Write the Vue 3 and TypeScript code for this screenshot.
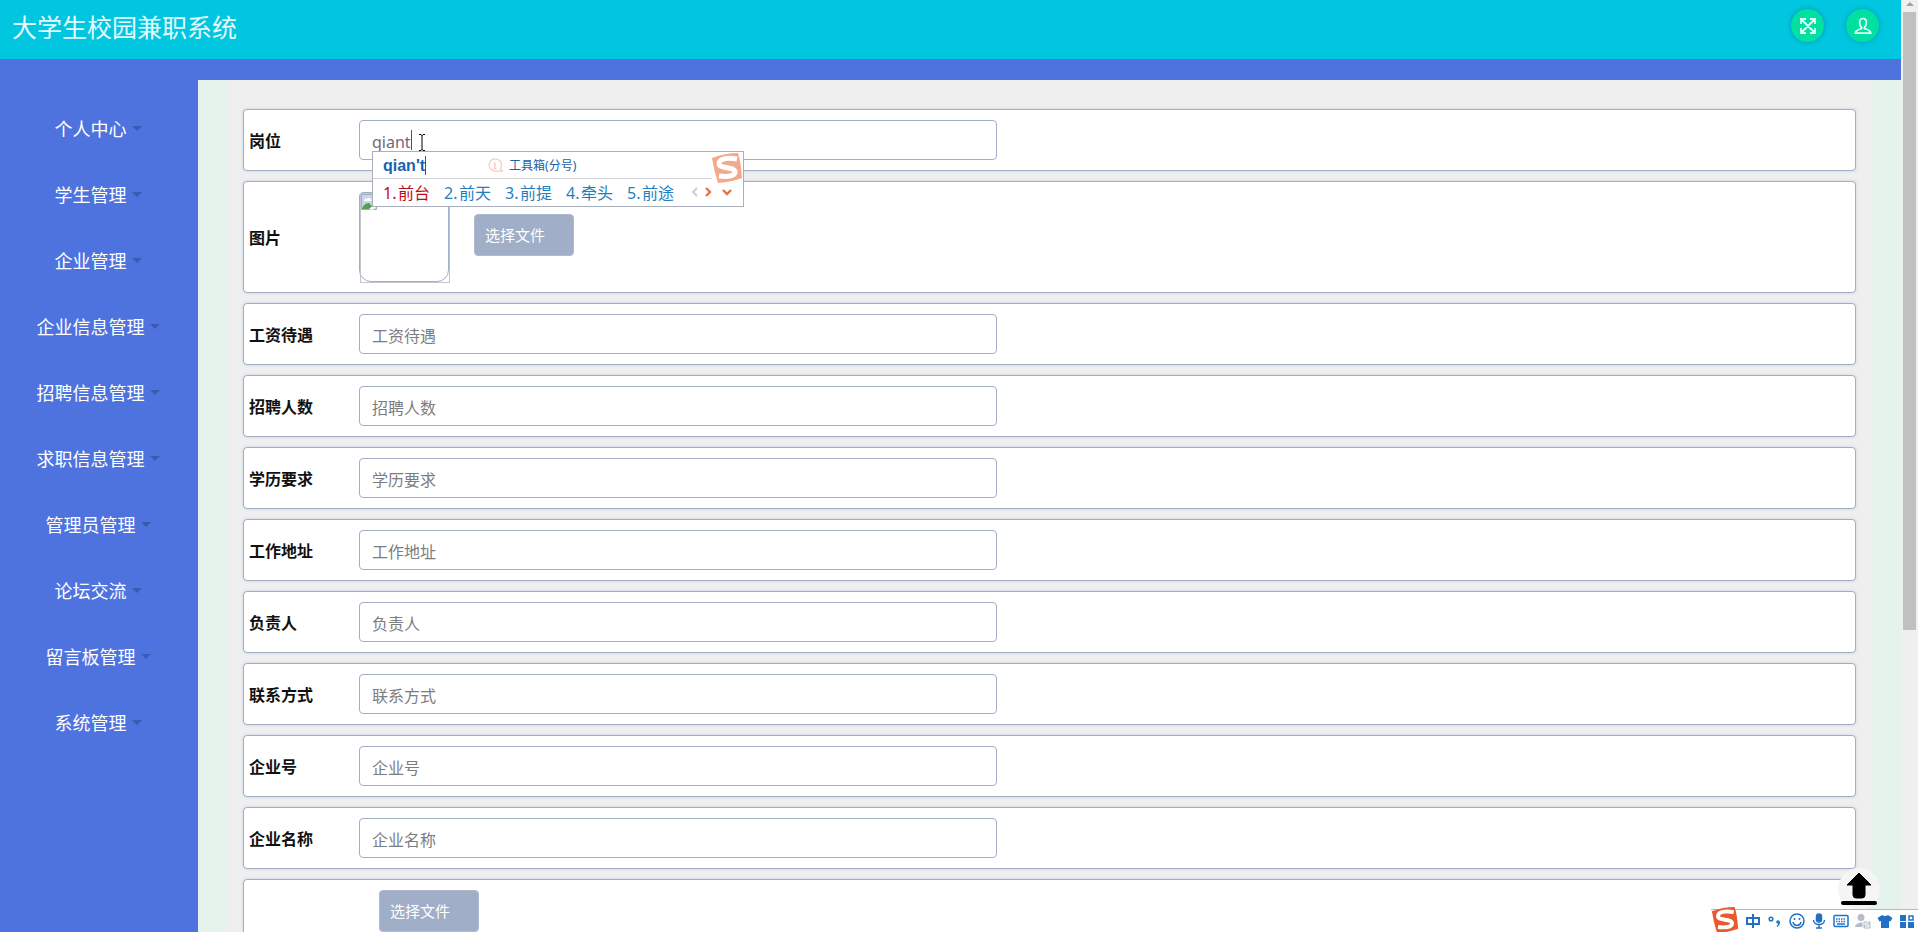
<script setup lang="ts">
import { ref } from 'vue'

interface Field {
  id: string
  label: string
}

const menus: string[] = [
  '个人中心',
  '学生管理',
  '企业管理',
  '企业信息管理',
  '招聘信息管理',
  '求职信息管理',
  '管理员管理',
  '论坛交流',
  '留言板管理',
  '系统管理',
]

const fields: Field[] = [
  { id: 'salary', label: '工资待遇' },
  { id: 'headcount', label: '招聘人数' },
  { id: 'education', label: '学历要求' },
  { id: 'address', label: '工作地址' },
  { id: 'principal', label: '负责人' },
  { id: 'contact', label: '联系方式' },
  { id: 'companyNo', label: '企业号' },
  { id: 'companyName', label: '企业名称' },
]

const candidates: string[] = ['前台', '前天', '前提', '牵头', '前途']
const post = ref('qiant')
</script>

<template>
  <div class="screen">
    <div class="page">
      <header class="top">
        <h1>大学生校园兼职系统</h1>
        <div class="actions">
          <button type="button" aria-label="全屏">
            <svg viewBox="0 0 16 16" width="16" height="16" fill="none" stroke="#e4fff6" stroke-width="1.8">
              <path d="M2 2l12 12M14 2L2 14M1 6V1h5M10 1h5v5M15 10v5h-5M6 15H1v-5" />
            </svg>
          </button>
          <button type="button" aria-label="用户">
            <svg viewBox="0 0 18 18" width="18" height="18" fill="none" stroke="#e4fff6" stroke-width="1.7">
              <path d="M9 1.500C6.400 1.500 5.600 3.500 5.600 5.500c0 2 .6 3.600 2 4.800v1.200C4.500 12.400 1.500 13 1.200 16.200h15.600c-.3-3.200-3.300-3.800-6.400-4.700v-1.200c1.400-1.200 2-2.800 2-4.800 0-2-.8-4-3.400-4z" />
            </svg>
          </button>
        </div>
      </header>

      <div class="body">
        <nav class="side">
          <a v-for="m in menus" :key="m" href="#">{{ m }}<i class="caret"></i></a>
        </nav>

        <main class="main">
          <form class="form" @submit.prevent>
            <div class="row">
              <label for="post">岗位</label>
              <div class="control">
                <input id="post" v-model="post" type="text" class="typing" />
                <span class="text-caret"></span>
                <svg class="ibeam" viewBox="0 0 8 17" width="8" height="17" fill="none" stroke="#000">
                  <path d="M1 .5h2l1 1 1-1h2M4 1v15M1 16.500h2l1-1 1 1h2" />
                </svg>
                <div class="ime">
                  <div class="ime-top">
                    <b>qian't</b>
                    <span class="tip">
                      <svg viewBox="0 0 16 14" width="16" height="14" fill="none" stroke="#f8cdbd" stroke-width="1.3">
                        <path d="M12.500 10.500a6.200 6.200 0 1 0-5.500 2.700h8q-2-.7-2.500-2.700zM5.500 6H7v4.500M5.500 10.500h3M6.200 3.800h1.500" />
                      </svg>
                      工具箱(分号)
                    </span>
                  </div>
                  <div class="ime-list">
                    <span v-for="(c, i) in candidates" :key="c" :class="{ on: i === 0 }"><em>{{ i + 1 }}.</em>{{ c }}</span>
                    <svg class="arrows" viewBox="0 0 44 12" width="44" height="12" fill="none" stroke="#e87045" stroke-width="2.4">
                      <path d="M9 2L5 6l4 4" stroke="#ccc" stroke-width="1.8" />
                      <path d="M18 2l4 4-4 4M35 4l4 4 4-4" />
                    </svg>
                  </div>
                  <svg class="ime-logo" viewBox="0 0 32 32" width="32" height="32">
                    <path d="M1 6Q14 1 27 1q3 9 4 25-10 4-24 5Q3 19 1 6z" fill="#f2a98c" />
                    <path d="M26 7C16 5 8 7 8 11.500c0 6 16 2.500 16 8.500 0 4.500-8 5-16 4" fill="none" stroke="#fff" stroke-width="5" />
                  </svg>
                </div>
              </div>
            </div>

            <div class="row tall">
              <span class="label">图片</span>
              <div class="preview" role="img" aria-label="图片">
                <svg viewBox="0 0 16 16" width="16" height="16">
                  <path d="M.5.5H15.500v15H.5z" fill="#c5d6f2" stroke="#a9adb5" />
                  <path d="M3 7c0-2 2-3 3-2 1-2 4-1 4 1l1 1z" fill="#fff" />
                  <path d="M1 15c1-4 4-6 7-6l6 6z" fill="#53a344" />
                  <path d="M8 15l8-7v4l-4 4z" fill="#fff" />
                </svg>
              </div>
              <button type="button" class="file">选择文件</button>
            </div>

            <div v-for="f in fields" :key="f.id" class="row">
              <label :for="f.id">{{ f.label }}</label>
              <div class="control">
                <input :id="f.id" type="text" :placeholder="f.label" />
              </div>
            </div>

            <div class="row tall last">
              <button type="button" class="file">选择文件</button>
            </div>
          </form>
        </main>
      </div>
    </div>

    <div class="scroll" aria-hidden="true">
      <svg viewBox="0 0 15 12" width="15" height="12"><path d="M3 6l4-4 4 4z" fill="#a0a0a0" /></svg>
      <div class="thumb"></div>
    </div>

    <button type="button" class="to-top" aria-label="返回顶部">
      <svg viewBox="0 0 36 34" width="36" height="34">
        <path d="M18 1L30 13h-6v10q0 3-3 3h-6q-3 0-3-3V13H6z" stroke="#000" stroke-linejoin="round" />
        <rect x="0" y="29" width="36" height="4" rx="2" />
      </svg>
    </button>

    <div class="ime-bar">
      <svg class="bar-logo" viewBox="0 0 32 32" width="28" height="28">
        <path d="M1 6Q14 1 27 1q3 9 4 25-10 4-24 5Q3 19 1 6z" fill="#e9592b" />
        <path d="M26 7C16 5 8 7 8 11.500c0 6 16 2.500 16 8.500 0 4.500-8 5-16 4" fill="none" stroke="#fff" stroke-width="4.5" />
      </svg>
      <svg viewBox="0 0 16 16" width="16" height="16" fill="none" stroke="#2172c4" stroke-width="2"><path d="M2 5h12v6H2zM8 1v14" /></svg>
      <svg viewBox="0 0 16 16" width="16" height="16" fill="none" stroke="#2172c4" stroke-width="1.5"><circle cx="4" cy="6" r="1.8" /><circle cx="11" cy="9" r="1.800" fill="#2172c4" stroke="none" /><path d="M12 9c.5 2-.5 3.500-2 4.500" /></svg>
      <svg viewBox="0 0 16 16" width="16" height="16" fill="none" stroke="#2172c4" stroke-width="1.5"><circle cx="8" cy="8" r="7" /><path d="M4 9c1 4.500 7 4.500 8 0M5.500 5v2M10.500 5v2" /></svg>
      <svg viewBox="0 0 16 16" width="16" height="16" fill="none" stroke="#2172c4" stroke-width="1.5"><rect x="5.500" y="1" width="5" height="8" rx="2.5" fill="#2172c4" /><path d="M2.500 7c0 6 11 6 11 0M8 12v3M5 15h6" /></svg>
      <svg viewBox="0 0 16 16" width="16" height="16" fill="none" stroke="#2172c4" stroke-width="1.5"><rect x="1" y="2.5" width="14" height="11" rx="1" /><path d="M3 6h10M3 8.500h10" stroke-dasharray="1.5 1" /><path d="M4 11h8" /></svg>
      <svg viewBox="0 0 16 16" width="16" height="16" fill="#b4bccb"><circle cx="6" cy="4.5" r="3.5" /><path d="M0 14c0-5 12-7 12 0z" /><rect x="8" y="8" width="8" height="8" rx="1" stroke="#fff" /><path d="M14 10h-4v2h4v2h-4" stroke="#fff" fill="none" /></svg>
      <svg viewBox="0 0 16 16" width="16" height="16" fill="#2172c4"><path d="M5 2q3 2 6 0l4.500 3-2 3.500L12 8v7H4V8l-1.500.5L.5 5z" /></svg>
      <svg viewBox="0 0 16 16" width="16" height="16" fill="#2172c4"><path d="M1 2h6v6H1zM1 9h6v6H1zM9 9h6v6H9z" /><path d="M10 3h4v4h-4z" fill="none" stroke="#2172c4" stroke-width="1.5" /></svg>
    </div>
  </div>
</template>

<style>
body {
  margin: 0;
}
</style>

<style scoped>
* {
  box-sizing: border-box;
}

.screen {
  position: relative;
  display: flex;
  height: 100vh;
  overflow: hidden;
  font-family: "Noto Sans", "Noto Sans CJK SC", sans-serif;
  font-size: 16px;
  background: #f0f0f0;
}

.page {
  flex: 1;
  min-width: 0;
  display: flex;
  flex-direction: column;
  background: #4e73df;
}

.top {
  height: 59px;
  flex: none;
  display: flex;
  justify-content: space-between;
  padding: 0 22px 0 12px;
  background: #00c6df;
}

h1 {
  margin: 0;
  font-size: 25px;
  font-weight: 400;
  line-height: 54px;
  color: #e4fbff;
}

.actions {
  display: flex;
  gap: 22px;
  padding-top: 9px;
}

.actions button {
  display: grid;
  place-items: center;
  width: 33px;
  height: 33px;
  padding: 0;
  border: 0;
  border-radius: 50%;
  background: #00e0a0;
  box-shadow: 0 0 5px rgba(0, 80, 120, 0.4);
}

.body {
  flex: 1;
  min-height: 0;
  display: flex;
  padding-top: 21px;
}

.side {
  flex: none;
  width: 198px;
  padding: 15px 2px 0 0;
}

.side a {
  display: flex;
  align-items: center;
  justify-content: center;
  height: 66px;
  font-size: 18px;
  color: #fff;
  text-decoration: none;
}

.caret {
  margin-left: 5px;
  border: 5px solid transparent;
  border-top-color: #3a5bb2;
  border-bottom: 0;
}

.main {
  flex: 1;
  min-width: 0;
  overflow: hidden;
  padding: 0 29px 0 30px;
  background: #e6f2ec;
}

.form {
  padding: 29px 16px 0 15px;
  background: #eeefee;
  display: flex;
  flex-direction: column;
  gap: 10px;
}

.row {
  display: flex;
  align-items: center;
  height: 62px;
  padding: 0 10px 0 5px;
  border: 1px solid #a2aec6;
  border-radius: 4px;
  background: #fff;
  box-shadow: 0 0 3px rgba(160, 180, 215, 0.5);
}

.row.tall {
  height: 112px;
}

.row label,
.row .label {
  flex: none;
  width: 110px;
  font-weight: 700;
  color: #111;
}

.control {
  position: relative;
  width: 40%;
}

input {
  display: block;
  width: 100%;
  height: 40px;
  padding: 3px 12px 0;
  border: 1px solid #a2aec6;
  border-radius: 4px;
  outline: 0;
  background: #fff;
  font: inherit;
  color: #6e707e;
}

input::placeholder {
  color: #7b7d83;
  opacity: 1;
}

.typing {
  color: #766878;
}

.text-caret {
  position: absolute;
  left: 52px;
  top: 10px;
  width: 1px;
  height: 20px;
  background: #704060;
}

.ibeam {
  position: absolute;
  left: 59px;
  top: 14px;
}

.ime {
  position: absolute;
  z-index: 2;
  left: 13px;
  top: 31px;
  width: 372px;
  height: 56px;
  border: 1px solid #a9afbb;
  background: #fff;
}

.ime-top {
  display: flex;
  align-items: center;
  height: 27px;
  margin-right: 31px;
  padding-left: 10px;
  border-bottom: 1px solid #d4d4d8;
}

.ime-top b {
  border-right: 1px solid #c8202c;
  font: 700 16px/19px "Liberation Sans", sans-serif;
  color: #1763b0;
}

.tip {
  display: flex;
  align-items: center;
  gap: 5px;
  margin-left: 62px;
  font-size: 12px;
  color: #1c5fa5;
}

.ime-list {
  display: flex;
  align-items: center;
  height: 26px;
  padding-left: 10px;
  color: #1f7fbe;
}

.ime-list span {
  flex: none;
  width: 61px;
  white-space: nowrap;
}

.ime-list em {
  display: inline-block;
  width: 15px;
  font-style: normal;
}

.ime-list .on {
  color: #c00c18;
}

.arrows {
  flex: none;
}

.ime-logo {
  position: absolute;
  right: 0;
  top: 0;
}

.preview {
  width: 90px;
  height: 90px;
  padding: 1px;
  border: 1px solid #a2aec6;
  border-radius: 4px 4px 12px 12px;
  box-shadow: 0 0 0 1px #fff;
  background: #fff;
}

/* square frame of the missing image, behind the rounded border */
.preview {
  position: relative;
}

.preview::after {
  content: "";
  position: absolute;
  inset: 0 -2px -2px 0;
  border: 1px solid #c2c5cd;
}

.preview svg {
  display: block;
}

.file {
  width: 100px;
  height: 42px;
  margin: 0 0 4px 25px;
  padding: 0 10px 2px;
  border: 1px solid #b0bace;
  border-radius: 4px;
  background: #a0aec8;
  font: inherit;
  font-size: 15px;
  text-align: left;
  color: #fff;
}

.row.last {
  align-items: flex-start;
  padding: 10px 10px 10px 110px;
}

.scroll {
  flex: none;
  width: 17px;
  padding: 0 2px;
  background: #f0f0f0;
}

.scroll svg {
  display: block;
}

.thumb {
  width: 13px;
  height: calc(66% + 3px);
  background: #c0c0c0;
}

.to-top {
  position: absolute;
  right: 38px;
  bottom: 22px;
  display: grid;
  place-items: center;
  width: 42px;
  height: 42px;
  padding: 0;
  border: 0;
  border-radius: 50%;
  background: #f5f5f5;
}

.ime-bar {
  position: absolute;
  right: 0;
  bottom: 0;
  display: flex;
  align-items: center;
  gap: 6px;
  height: 23px;
  padding: 0 3px 0 34px;
  border-top: 1px solid #b4b8c0;
  background: #fff;
}

.bar-logo {
  position: absolute;
  left: 0;
  bottom: -2px;
}
</style>
